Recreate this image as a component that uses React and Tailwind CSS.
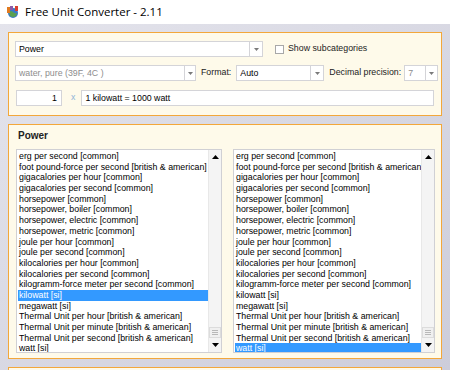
import React from "react";

const left = [
  "erg per second [common]",
  "foot pound-force per second [british & american]",
  "gigacalories per hour [common]",
  "gigacalories per second [common]",
  "horsepower [common]",
  "horsepower, boiler [common]",
  "horsepower, electric [common]",
  "horsepower, metric [common]",
  "joule per hour [common]",
  "joule per second [common]",
  "kilocalories per hour [common]",
  "kilocalories per second [common]",
  "kilogramm-force meter per second [common]",
  "kilowatt [si]",
  "megawatt [si]",
  "Thermal Unit per hour [british & american]",
  "Thermal Unit per minute [british & american]",
  "Thermal Unit per second [british & american]",
  "watt [si]",
];

function Arrow({ up = false }) {
  return (
    <svg width="7" height="4" viewBox="0 0 7 4">
      {up ? (
        <path d="M0 4 L3.5 0 L7 4 Z" fill="#000" />
      ) : (
        <path d="M0 0 L7 0 L3.5 4 Z" fill="#000" />
      )}
    </svg>
  );
}

function Combo({ text, w, gray = false, btn = 13 }) {
  return (
    <div
      className="flex h-[16px] shrink-0 border border-[#d4d4d8] bg-white"
      style={{ width: w }}
    >
      <div
        className={`flex-1 whitespace-nowrap pl-[3px] leading-[14px] ${gray ? "text-[#8d8d8d]" : "text-black"}`}
      >
        {text}
      </div>
      <div
        className="flex items-center justify-center border-l border-[#d4d4d8]"
        style={{ width: btn }}
      >
        <svg width="5" height="3" viewBox="0 0 5 3">
          <path d="M0 0 L5 0 L2.5 3 Z" fill="#7a7a7a" />
        </svg>
      </div>
    </div>
  );
}

function ListBox({ items, selected, w }) {
  return (
    <div
      className="flex h-[204px] shrink-0 border border-[#d0d0d4] bg-white"
      style={{ width: w }}
    >
      <div className="flex-1 overflow-hidden pl-[1px] pt-[1px]">
        {items.map((t, i) => (
          <div
            key={t}
            className={`h-[10.7px] whitespace-nowrap pl-[1px] leading-[10.7px] ${
              i === selected ? "bg-[#3399ff] text-white" : "text-black"
            }`}
          >
            {t}
          </div>
        ))}
      </div>
      <div className="flex w-[13px] flex-col border-l border-[#e8e8e8] bg-[#f4f4f4]">
        <div className="flex h-[14px] items-center justify-center">
          <Arrow up />
        </div>
        <div className="flex-1" />
        <div className="flex h-[11px] flex-col items-center justify-center gap-[1px] border border-[#dcdcdc] bg-[#f0f0f0]">
          <div className="h-[1px] w-[6px] bg-[#b8b8b8]" />
          <div className="h-[1px] w-[6px] bg-[#b8b8b8]" />
          <div className="h-[1px] w-[6px] bg-[#b8b8b8]" />
        </div>
        <div className="flex h-[14px] items-center justify-center">
          <Arrow />
        </div>
      </div>
    </div>
  );
}

export default function App() {
  return (
    <div
      className="flex h-[370px] w-[450px] flex-col overflow-hidden bg-white text-[8.8px]"
      style={{ fontFamily: "'Liberation Sans', Arial, sans-serif" }}
    >
      <div className="flex h-[24px] shrink-0 items-center gap-[5px] pl-[6px]">
        <svg width="14" height="14" viewBox="0 0 14 14">
          <circle cx="7" cy="8" r="5" fill="#3a78c8" />
          <path d="M3 7 Q5 5 7 7 T11 8 L10 11 Q7 13 4 11 Z" fill="#5aa050" />
          <rect x="1" y="2" width="3" height="6" fill="#e07a20" />
          <rect x="9" y="1" width="3" height="5" fill="#d84030" />
          <rect x="4" y="1" width="3" height="4" fill="#8a5aa8" />
        </svg>
        <span
          className="text-[11.5px] text-black"
          style={{ fontFamily: "'Open Sans', 'Liberation Sans', sans-serif" }}
        >
          Free Unit Converter - 2.11
        </span>
      </div>
      <div className="flex flex-1 flex-col gap-[8px] overflow-hidden bg-gradient-to-br from-[#e4e4ec] to-[#cdcdda] px-[8px] pt-[8px]">
        <div className="flex h-[84px] w-[434px] shrink-0 flex-col gap-[8px] border border-[#f3a73a] bg-[#fefaea] pl-[6px] pt-[8px]">
          <div className="flex h-[16px] items-center">
            <Combo text="Power" w={248} />
            <div className="ml-[12px] h-[9px] w-[9px] shrink-0 border border-[#a8a8a8] bg-white" />
            <span className="ml-[4px] whitespace-nowrap text-[#222]">Show subcategories</span>
          </div>
          <div className="flex h-[16px] items-center">
            <Combo text="water, pure (39F, 4C )" w={181} gray btn={11} />
            <span className="ml-[5px] whitespace-nowrap text-[#222]">Format:</span>
            <div className="ml-[5px]">
              <Combo text="Auto" w={88} />
            </div>
            <span className="ml-[5px] whitespace-nowrap text-[#222]">Decimal precision:</span>
            <div className="ml-[3px]">
              <Combo text="7" w={34} gray btn={12} />
            </div>
          </div>
          <div className="mt-[1px] flex h-[16px] items-center">
            <div className="ml-[1px] h-[16px] w-[46px] shrink-0 border border-[#d4d4d8] bg-white pr-[4px] text-right leading-[14px]">
              1
            </div>
            <span className="ml-[9px] text-[#8fb4d8]">x</span>
            <div className="ml-[6px] h-[16px] w-[353px] shrink-0 border border-[#d4d4d8] bg-white pl-[3px] leading-[14px]">
              1 kilowatt = 1000 watt
            </div>
          </div>
        </div>
        <div className="flex h-[235px] w-[434px] shrink-0 flex-col border border-[#f3a73a] bg-[#fefaea] pl-[7px] pt-[2px]">
          <div className="h-[17px] pl-[2px] text-[10px] font-bold leading-[17px] text-[#222]">
            Power
          </div>
          <div className="mt-[5px] flex gap-[11px]">
            <ListBox items={left} selected={13} w={206} />
            <ListBox items={left} selected={18} w={202} />
          </div>
        </div>
        <div className="h-[20px] w-[434px] shrink-0 border border-[#f3a73a] bg-[#fefaea]" />
      </div>
    </div>
  );
}
